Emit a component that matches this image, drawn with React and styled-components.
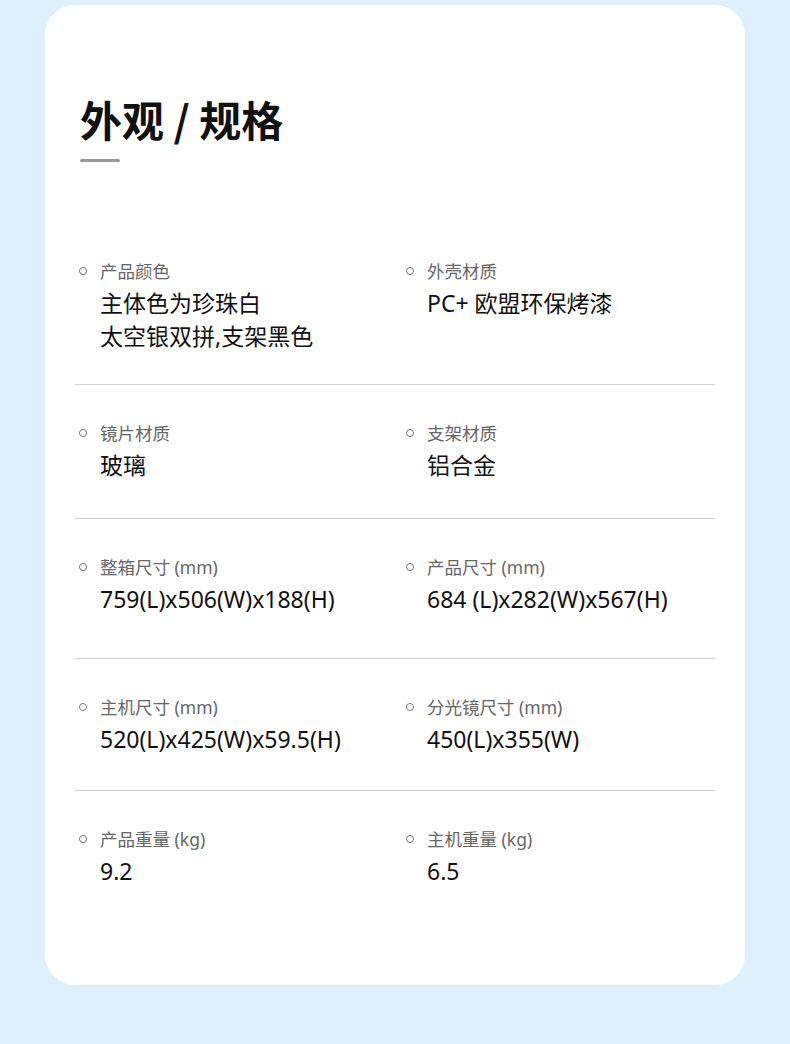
import React from 'react'
import styled, { createGlobalStyle } from 'styled-components'

// pad = space under each row, taken from the reference layout
const specs = [
  {
    pad: 31,
    items: [
      { label: '产品颜色', value: ['主体色为珍珠白', '太空银双拼,支架黑色'] },
      { label: '外壳材质', value: ['PC+ 欧盟环保烤漆'] }
    ]
  },
  {
    pad: 36,
    items: [
      { label: '镜片材质', value: ['玻璃'] },
      { label: '支架材质', value: ['铝合金'] }
    ]
  },
  {
    pad: 42,
    items: [
      { label: '整箱尺寸 (mm)', value: ['759(L)x506(W)x188(H)'] },
      { label: '产品尺寸 (mm)', value: ['684 (L)x282(W)x567(H)'] }
    ]
  },
  {
    pad: 34,
    items: [
      { label: '主机尺寸 (mm)', value: ['520(L)x425(W)x59.5(H)'] },
      { label: '分光镜尺寸 (mm)', value: ['450(L)x355(W)'] }
    ]
  },
  {
    pad: 36,
    items: [
      { label: '产品重量 (kg)', value: ['9.2'] },
      { label: '主机重量 (kg)', value: ['6.5'] }
    ]
  }
]

const App = () => (
  <>
    <GlobalStyle />
    <SPage>
      <SCard>
        <STitle>外观 / 规格</STitle>
        <SBar />
        <SList>
          {specs.map((row, i) => (
            <SRow key={i} pad={row.pad} last={i === specs.length - 1}>
              {row.items.map(item => (
                <SItem key={item.label}>
                  <SBullet />
                  <SText>
                    <SLabel>{item.label}</SLabel>
                    {item.value.map(line => <SValue key={line}>{line}</SValue>)}
                  </SText>
                </SItem>
              ))}
            </SRow>
          ))}
        </SList>
      </SCard>
    </SPage>
  </>
)

const GlobalStyle = createGlobalStyle`
  html, body {
    margin: 0;
    padding: 0;
    background: #def0fb;
  }
  body {
    font-family: "Noto Sans CJK SC", "Noto Sans", sans-serif;
  }
`

const SPage = styled.div`
  width: 790px;
  height: 1044px;
  padding-top: 5px;
  box-sizing: border-box;
  background: #def0fb;
`

const SCard = styled.div`
  margin-left: 45px;
  width: 700px;
  height: 980px;
  box-sizing: border-box;
  padding: 89px 30px 0 30px;
  background: #fff;
  border-radius: 30px;
`

const STitle = styled.h1`
  margin: 0 0 0 5px;
  font-size: 42px;
  line-height: 50px;
  font-weight: 700;
  color: #111;
`

const SBar = styled.div`
  margin: 15px 0 0 5px;
  width: 40px;
  height: 3px;
  border-radius: 2px;
  background: #999;
`

const SList = styled.div`
  margin-top: 61px;
  width: 640px;
`

const SRow = styled.div`
  display: grid;
  grid-template-columns: 327px 1fr;
  padding: 36px 0 ${p => p.pad}px 4px;
  border-bottom: ${p => (p.last ? 'none' : '1px solid #cfcfcf')};
`

const SItem = styled.div`
  display: flex;
  align-items: flex-start;
  gap: 13px;
`

const SBullet = styled.span`
  flex: none;
  width: 8px;
  height: 8px;
  margin-top: 8px;
  box-sizing: border-box;
  border: 1.3px solid #777;
  border-radius: 50%;
`

const SText = styled.div`
  display: flex;
  flex-direction: column;
`

const SLabel = styled.div`
  font-family: "Noto Sans", "Noto Sans CJK SC", sans-serif;
  font-size: 17.5px;
  line-height: 24px;
  color: #666;
  margin-bottom: 4px;
`

const SValue = styled.div`
  font-family: "Noto Sans", "Noto Sans CJK SC", sans-serif;
  font-size: 23px;
  line-height: 33px;
  color: #111;
`

export default App
